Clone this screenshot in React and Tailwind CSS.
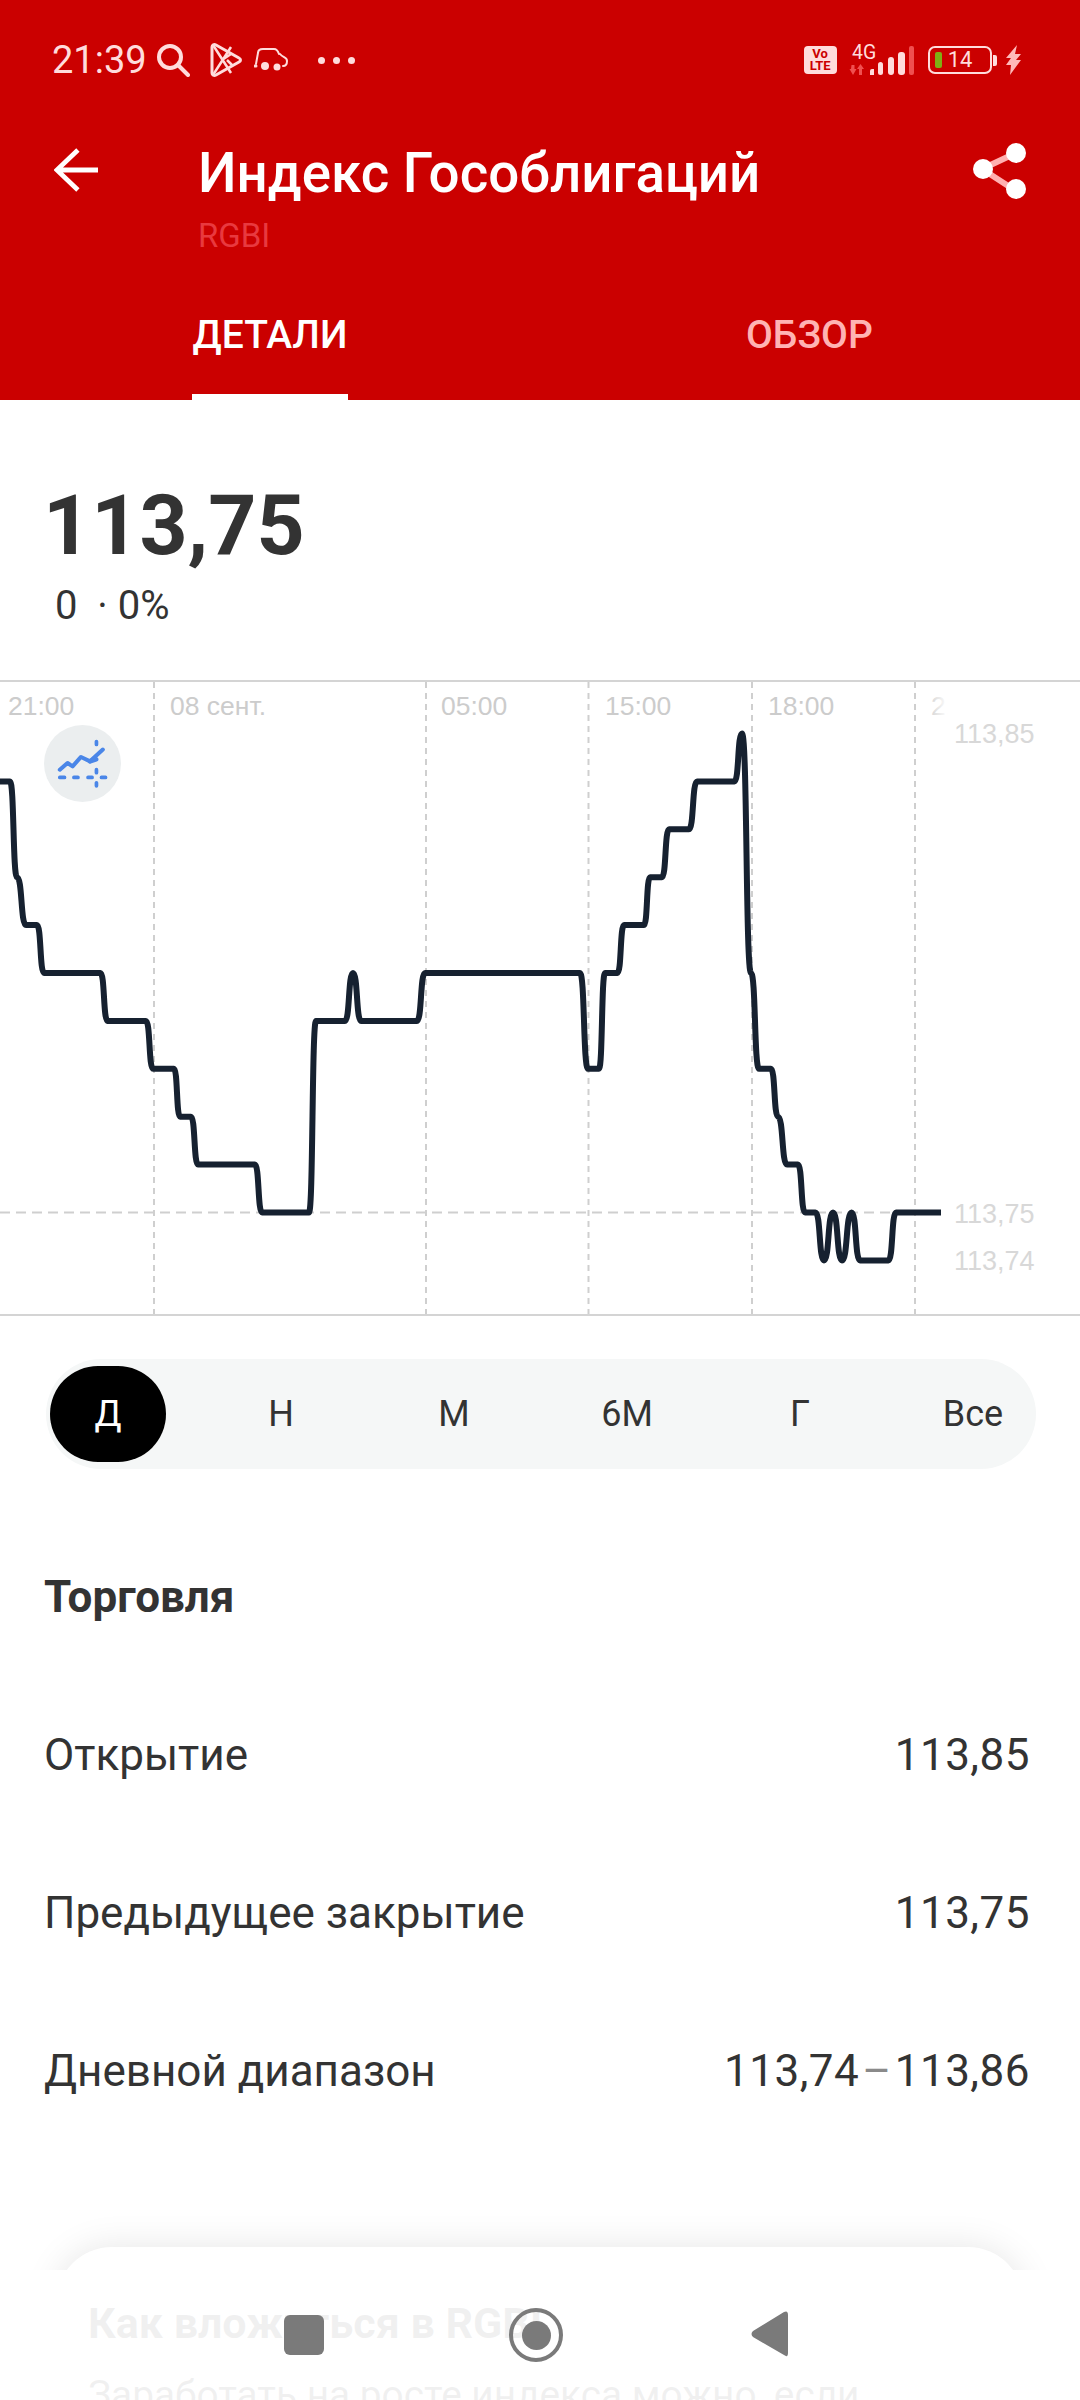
import React from "react";

// chart corners: [x in px, price level]
const curve = [
  [0, 84], [10, 84], [17, 82], [26, 81], [37, 81], [44, 80], [100.5, 80], [107.5, 79], [146, 79], [153, 78],
  [174, 78], [180, 77], [191, 77], [198, 76], [255, 76], [262, 75], [309, 75], [316, 79], [345, 79], [353, 80],
  [361, 79], [417, 79], [425, 80], [580, 80], [588, 78], [599, 78], [605, 80], [617.5, 80], [624, 81], [644, 81],
  [650, 82], [662, 82], [669, 83], [689, 83], [697, 84], [734.5, 84], [742, 85], [751, 80], [759, 78], [771, 78],
  [778, 77], [787, 76], [798, 76], [805, 75], [815.5, 75], [824, 74], [833, 75], [842, 74], [851.6, 75], [860, 74],
  [888.5, 74], [896, 75], [941, 75],
];

const levelY = (l) => 530.5 + (75 - l) * 47.9;

const buildPath = () => {
  let d = `M${curve[0][0]} ${levelY(curve[0][1])}`;
  for (let i = 1; i < curve.length; i++) {
    const [x0, l0] = curve[i - 1];
    const [x1, l1] = curve[i];
    const dx = x1 - x0;
    if (l0 === l1) {
      d += ` L${x1} ${levelY(l1)}`;
    } else {
      d += ` C${x0 + dx * 0.6} ${levelY(l0)} ${x1 - dx * 0.6} ${levelY(l1)} ${x1} ${levelY(l1)}`;
    }
  }
  return d;
};

const timeLabels = [
  { text: "21:00", cls: "left-[8px]" },
  { text: "08 сент.", cls: "left-[170px]" },
  { text: "05:00", cls: "left-[441px]" },
  { text: "15:00", cls: "left-[605px]" },
  { text: "18:00", cls: "left-[768px]" },
  { text: "21:00", cls: "left-[931px]" },
];

const rows = [
  ["Открытие", "113,85"],
  ["Предыдущее закрытие", "113,75"],
];

const ranges = ["Д", "Н", "М", "6М", "Г", "Все"];

const StatusBar = () => (
  <div className="flex items-center h-[80px] pt-[40px] pl-[52px] text-[#ffdcdc]">
    <span className="text-[38px] leading-none">21:39</span>
    <svg width="34" height="34" viewBox="0 0 34 34" fill="none" stroke="#ffdcdc" strokeWidth="4" strokeLinecap="round" className="ml-[9px]">
      <circle cx="14" cy="14" r="11" />
      <path d="M22 22l10 10" />
    </svg>
    <svg width="34" height="36" viewBox="0 0 34 36" fill="none" stroke="#ffdcdc" strokeWidth="3" strokeLinejoin="round" className="ml-[19px]">
      <path d="M3 5c0-2 2-3 4-2l23 13c2 1 2 3 0 4L7 33c-2 1-4 0-4-2z" />
      <path d="M4 3l18 28M4 33L22 5M13 18l9-6M18 18l6 6" strokeWidth="2.5" />
    </svg>
    <svg width="36" height="26" viewBox="0 0 36 26" fill="none" stroke="#ffdcdc" strokeWidth="2" strokeLinecap="round" className="ml-[11px]">
      <path d="M2 17L4 6c0-3 2-4 5-4h11c3 0 4 2 5 5" />
      <path d="M26 7c3 4 7 3 7 7s-2 5-4 5" />
      <path d="M1 19h1" strokeWidth="3" />
      <circle cx="11" cy="19" r="4" fill="#ffdcdc" stroke="none" />
      <circle cx="23" cy="20" r="3.5" fill="#ffdcdc" stroke="none" />
    </svg>
    <div className="flex items-center gap-[8px] ml-[28px]">
      <span className="w-[7px] h-[7px] rounded-full bg-[#ffdcdc]" />
      <span className="w-[7px] h-[7px] rounded-full bg-[#ffdcdc]" />
      <span className="w-[7px] h-[7px] rounded-full bg-[#ffdcdc]" />
    </div>
    <div className="ml-[449px] w-[33px] h-[28px] rounded-[4px] bg-[#ffdcdc] flex flex-col items-center justify-center text-[#cb0000] text-[13px] leading-[12px] font-bold">
      <span>Vo</span>
      <span>LTE</span>
    </div>
    <svg width="66" height="32" viewBox="0 0 66 32" className="ml-[12px] overflow-visible">
      <text x="3" y="15" fontSize="19.5" fontFamily="Roboto" fill="#ffdcdc">4G</text>
      <path d="M2.5 21h3v4h2L4 31l-3.500-6h1.500zM10 31v-6H8l3.500-5 3.500 5h-2v6z" fill="#f05050" />
      <path d="M21 31v-4q0-2 2-2h2v6z" fill="#ffdcdc" />
      <rect x="29" y="18" width="5" height="13" rx="2.5" fill="#ffdcdc" />
      <rect x="39" y="13" width="6" height="18" rx="3" fill="#ffdcdc" />
      <rect x="49" y="8" width="7" height="23" rx="3" fill="#ffdcdc" />
      <rect x="60" y="2" width="5" height="29" rx="2" fill="#f05050" />
    </svg>
    <div className="ml-[13px] w-[64px] h-[28px] rounded-[7px] border-[2.5px] border-[#ffdcdc] flex items-center pl-[5px]">
      <span className="w-[7px] h-[16px] rounded-[2px] bg-[#7fae14]" />
      <span className="ml-[6px] text-[22px] leading-none text-[#ffdcdc]">14</span>
    </div>
    <span className="ml-[1px] w-[4px] h-[11px] rounded-r-[2px] bg-[#ffdcdc]" />
    <svg width="17" height="30" viewBox="0 0 17 30" fill="#ffb9b9" className="ml-[8px]">
      <path d="M12 0L1 13h5L1 20h5l-1 10 11-15h-5l5-6h-6z" />
    </svg>
  </div>
);

const Header = () => (
  <div className="bg-[#cb0000] h-[400px] flex flex-col">
    <StatusBar />
    <div className="flex items-start mt-[48px] h-[132px]">
      <svg width="44" height="44" viewBox="0 0 46 46" fill="none" stroke="#fff" strokeWidth="5" className="ml-[54px] mt-[20px] shrink-0">
        <path d="M46 23H4M25 2L3 23l22 21" />
      </svg>
      <div className="ml-[100px] mt-[17px] flex-1">
        <div className="text-[54.7px] leading-[56px] font-medium text-white">Индекс Гособлигаций</div>
        <div className="text-[33px] leading-[36px] text-[#e8393f] mt-[17px]">RGBI</div>
      </div>
      <svg width="56" height="56" viewBox="0 0 56 56" className="mr-[52px] mt-[15px] shrink-0">
        <path d="M44 10L10 26l34 22" fill="none" stroke="#ffb0b0" strokeWidth="6" />
        <circle cx="44" cy="10" r="10" fill="#fff" />
        <circle cx="11" cy="26" r="10" fill="#fff" />
        <circle cx="44" cy="46" r="10" fill="#fff" />
      </svg>
    </div>
    <div className="flex h-[140px] text-[39px] font-medium">
      <div className="ml-[192px] w-[156px] h-full border-b-[6px] border-white text-white text-center leading-[150px] whitespace-nowrap">ДЕТАЛИ</div>
      <div className="ml-[398px] text-[#ffb3b3] leading-[150px]">ОБЗОР</div>
    </div>
  </div>
);

const ChartIcon = () => (
  <div className="absolute left-[44px] top-[43px] w-[77px] h-[77px] rounded-full bg-[#ebeeef] flex items-center justify-center z-20">
    <svg width="77" height="77" viewBox="133 135 229 229" fill="none" stroke="#4a86e8" strokeLinecap="round">
      <path d="M180 268l23-20 15 10 25-28 27 13 38-35" strokeWidth="12" strokeLinejoin="round" />
      <path d="M270 243l18-6" strokeWidth="14" />
      <path d="M180 291h14M222 291h12M264 291h12M304 291h12M289 184v9M289 268v9M289 307v9" strokeWidth="11" />
    </svg>
  </div>
);

const Chart = () => (
  <div className="relative h-[636px] border-t-2 border-b-2 border-[#d4d4d4] overflow-hidden font-['Liberation_Sans',sans-serif]">
    {timeLabels.map((l, i) => (
      <span key={i} className={`absolute top-[8px] text-[26.5px] leading-[32px] text-[#cccccc] ${l.cls}`}>
        {l.text}
      </span>
    ))}
    <div className="absolute left-[926px] right-0 top-0 bottom-0 bg-[linear-gradient(to_right,transparent,white_22px)]" />
    <svg width="1080" height="632" viewBox="0 0 1080 632" fill="none" className="relative block z-10">
      <g stroke="#cfcfcf" strokeWidth="2" strokeDasharray="6 5">
        <path d="M154 0V632M426 0V632M588.5 0V632M752 0V632M915 0V632" />
      </g>
      <path d="M0 530.5H941" stroke="#cfcfcf" strokeWidth="2" strokeDasharray="10 6" />
      <path d={buildPath()} stroke="#162130" strokeWidth="6" strokeLinejoin="round" />
    </svg>
    <span className="absolute z-10 left-[954px] top-[36px] text-[27px] leading-[32px] text-[#d8d8d8]">113,85</span>
    <span className="absolute z-10 left-[954px] top-[516px] text-[27px] leading-[32px] text-[#d8d8d8]">113,75</span>
    <span className="absolute z-10 left-[954px] top-[563px] text-[27px] leading-[32px] text-[#d8d8d8]">113,74</span>
    <ChartIcon />
  </div>
);

const RangeTabs = () => (
  <div className="mt-[43px] ml-[46px] mr-[44px] h-[110px] rounded-full bg-[#f5f7f7] flex items-center justify-between pl-[4px] pr-[5px]">
    {ranges.map((r, i) => (
      <div
        key={r}
        className={
          i === 0
            ? "w-[116px] h-[96px] rounded-full bg-black text-white flex items-center justify-center text-[36px]"
            : "w-[116px] h-[96px] rounded-full text-[#333333] flex items-center justify-center text-[36px]"
        }
      >
        {r}
      </div>
    ))}
  </div>
);

const BottomSheet = () => (
  <div className="absolute left-[56px] right-[56px] top-[2247px] h-[300px] rounded-t-[56px] bg-white shadow-[0_0_36px_rgba(0,0,0,0.1)] pt-[50px] pl-[32px]">
    <div className="text-[43px] leading-[52px] font-bold text-[#333333]">Как вложиться в RGBI</div>
    <div className="mt-[20px] text-[38.8px] leading-[52px] text-[#333333] whitespace-nowrap">Заработать на росте индекса можно, если</div>
  </div>
);

const NavBar = () => (
  <div className="absolute left-0 right-0 top-[2270px] bottom-0 bg-white/[0.93] flex items-start">
    <span className="ml-[284px] mt-[45px] w-[40px] h-[40px] rounded-[6px] bg-[#7a7a7a]" />
    <span className="ml-[185px] mt-[38px] w-[54px] h-[54px] rounded-full border-[4px] border-[#7a7a7a] flex items-center justify-center">
      <span className="w-[29px] h-[29px] rounded-full bg-[#7a7a7a]" />
    </span>
    <svg width="38" height="46" viewBox="0 0 38 46" fill="#7a7a7a" className="ml-[188px] mt-[41px]">
      <path d="M33 1q4-2 4 3v38q0 5-4 2L2 26q-3-3 0-6z" />
    </svg>
  </div>
);

export default function App() {
  return (
    <div className="relative w-[1080px] h-[2400px] overflow-hidden bg-white font-['Roboto',sans-serif]">
      <Header />
      <div className="h-[280px] pl-[43px] pt-[78px]">
        <div className="text-[84px] leading-[96px] font-bold text-[#333333]">113,75</div>
        <div className="mt-[11px] ml-[12px] text-[40px] leading-[42px] text-[#333333]">0 &nbsp;· 0%</div>
      </div>
      <Chart />
      <RangeTabs />
      <div className="ml-[44px] mt-[103px] text-[44px] leading-[50px] font-bold text-[#333333]">Торговля</div>
      <div className="ml-[44px] mr-[50px] mt-[108px] flex flex-col text-[44px] leading-[50px] text-[#333333]">
        {rows.map(([label, value]) => (
          <div key={label} className="flex justify-between h-[158px]">
            <span>{label}</span>
            <span className="tracking-[0.5px]">{value}</span>
          </div>
        ))}
        <div className="flex justify-between h-[158px]">
          <span>Дневной диапазон</span>
          <span className="tracking-[0.5px]">
            113,74<span className="mx-[3px] text-[#8a8a8a]">–</span>113,86
          </span>
        </div>
      </div>
      <BottomSheet />
      <NavBar />
    </div>
  );
}
